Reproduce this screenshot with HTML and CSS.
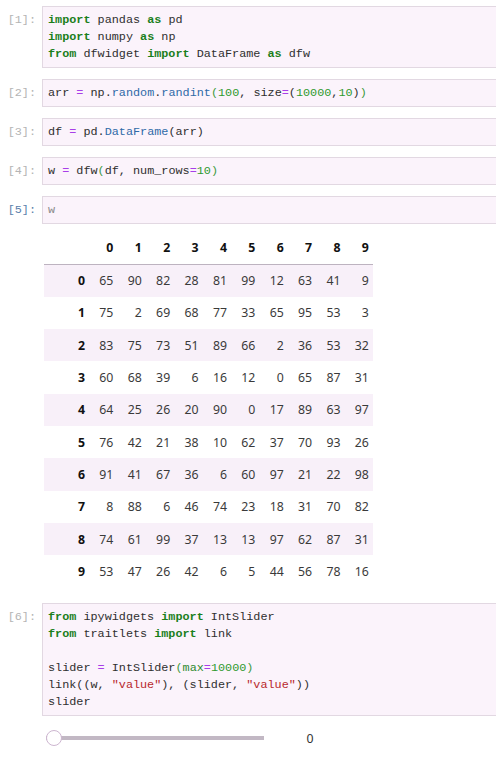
FILE: index.html
```html
<!DOCTYPE html>
<html>
<head>
<meta charset="utf-8">
<link rel="stylesheet" href="styles.css">
</head>
<body>
<div class="nb">
  <div class="cell">
    <div class="prompt">[1]:</div>
    <div class="input">
      <div class="ln"><span class="k">import</span> pandas <span class="k">as</span> pd</div>
      <div class="ln"><span class="k">import</span> numpy <span class="k">as</span> np</div>
      <div class="ln"><span class="k">from</span> dfwidget <span class="k">import</span> DataFrame <span class="k">as</span> dfw</div>
    </div>
  </div>
  <div class="cell">
    <div class="prompt">[2]:</div>
    <div class="input">
      <div class="ln">arr <span class="o">=</span> np.<span class="p">random</span>.<span class="p">randint</span><span class="mb">(</span><span class="n">100</span>, size<span class="o">=</span>(<span class="n">10000</span>,<span class="n">10</span>)<span class="mb">)</span></div>
    </div>
  </div>
  <div class="cell">
    <div class="prompt">[3]:</div>
    <div class="input">
      <div class="ln">df <span class="o">=</span> pd.<span class="p">DataFrame</span>(arr)</div>
    </div>
  </div>
  <div class="cell">
    <div class="prompt">[4]:</div>
    <div class="input">
      <div class="ln">w <span class="o">=</span> dfw<span class="mb">(</span>df, num_rows<span class="o">=</span><span class="n">10</span><span class="mb">)</span></div>
    </div>
  </div>
  <div class="cell">
    <div class="prompt active">[5]:</div>
    <div class="input faded">
      <div class="ln">w</div>
    </div>
  </div>

  <div class="output">
    <table class="df">
      <colgroup>
        <col class="c-idx"><col class="c"><col class="c"><col class="c"><col class="c"><col class="c"><col class="c"><col class="c"><col class="c"><col class="c"><col class="c">
      </colgroup>
      <thead>
        <tr><th></th><th>0</th><th>1</th><th>2</th><th>3</th><th>4</th><th>5</th><th>6</th><th>7</th><th>8</th><th>9</th></tr>
      </thead>
      <tbody>
        <tr><th>0</th><td>65</td><td>90</td><td>82</td><td>28</td><td>81</td><td>99</td><td>12</td><td>63</td><td>41</td><td>9</td></tr>
        <tr><th>1</th><td>75</td><td>2</td><td>69</td><td>68</td><td>77</td><td>33</td><td>65</td><td>95</td><td>53</td><td>3</td></tr>
        <tr><th>2</th><td>83</td><td>75</td><td>73</td><td>51</td><td>89</td><td>66</td><td>2</td><td>36</td><td>53</td><td>32</td></tr>
        <tr><th>3</th><td>60</td><td>68</td><td>39</td><td>6</td><td>16</td><td>12</td><td>0</td><td>65</td><td>87</td><td>31</td></tr>
        <tr><th>4</th><td>64</td><td>25</td><td>26</td><td>20</td><td>90</td><td>0</td><td>17</td><td>89</td><td>63</td><td>97</td></tr>
        <tr><th>5</th><td>76</td><td>42</td><td>21</td><td>38</td><td>10</td><td>62</td><td>37</td><td>70</td><td>93</td><td>26</td></tr>
        <tr><th>6</th><td>91</td><td>41</td><td>67</td><td>36</td><td>6</td><td>60</td><td>97</td><td>21</td><td>22</td><td>98</td></tr>
        <tr><th>7</th><td>8</td><td>88</td><td>6</td><td>46</td><td>74</td><td>23</td><td>18</td><td>31</td><td>70</td><td>82</td></tr>
        <tr><th>8</th><td>74</td><td>61</td><td>99</td><td>37</td><td>13</td><td>13</td><td>97</td><td>62</td><td>87</td><td>31</td></tr>
        <tr><th>9</th><td>53</td><td>47</td><td>26</td><td>42</td><td>6</td><td>5</td><td>44</td><td>56</td><td>78</td><td>16</td></tr>
      </tbody>
    </table>
  </div>

  <div class="cell cell-last">
    <div class="prompt">[6]:</div>
    <div class="input">
      <div class="ln"><span class="k">from</span> ipywidgets <span class="k">import</span> IntSlider</div>
      <div class="ln"><span class="k">from</span> traitlets <span class="k">import</span> link</div>
      <div class="ln blank"></div>
      <div class="ln">slider <span class="o">=</span> IntSlider<span class="mb">(</span><span class="bi">max</span><span class="o">=</span><span class="n">10000</span><span class="mb">)</span></div>
      <div class="ln">link((w, <span class="s">"value"</span>), (slider, <span class="s">"value"</span>))</div>
      <div class="ln">slider</div>
    </div>
  </div>

  <div class="widget">
    <div class="slider">
      <div class="track"></div>
      <div class="knob"></div>
    </div>
    <div class="readout">0</div>
  </div>
</div>
</body>
</html>
```

FILE: styles.css
```css
html, body {
  margin: 0;
  padding: 0;
  background: #ffffff;
  overflow: hidden;
}

.nb {
  width: 496px;
  padding-top: 6px;
  display: flex;
  flex-direction: column;
}

.cell {
  display: flex;
  align-items: flex-start;
  margin-bottom: 11px;
}

.prompt {
  width: 36px;
  padding-right: 6px;
  padding-top: 6px;
  text-align: right;
  font-family: "Liberation Mono", "DejaVu Sans Mono", monospace;
  font-size: 11.8px;
  line-height: 17px;
  color: #b4b4b4;
  flex: none;
}

.prompt.active {
  color: #5a7eab;
}

.input {
  flex: 1;
  margin: 0;
  padding: 5px 0 4px 5px;
  background: #fbf3fb;
  border: 1px solid #e2d8e2;
  border-right: none;
  font-family: "Liberation Mono", "DejaVu Sans Mono", monospace;
  font-size: 11.8px;
  line-height: 17px;
  color: #2f2f2f;
}

.ln {
  height: 17px;
  white-space: pre;
}

.input.faded {
  color: #8a8a8a;
}

.k { color: #1b7f1b; font-weight: bold; }
.o { color: #a83fe8; }
.p { color: #2f6aa8; }
.n { color: #2e9a2e; }
.s { color: #b8282c; }
.mb { color: #3c9a3c; }
.bi { color: #2e8a2e; }

.output {
  margin-top: -4px;
  padding-left: 44px;
}

.df {
  border-collapse: collapse;
  table-layout: fixed;
  font-family: "Noto Sans", "Open Sans", sans-serif;
  font-size: 12.3px;
  color: #3a3a3a;
}

.c-idx { width: 45px; }
.c { width: 28.4px; }

.df th, .df td {
  padding: 0 4px 0 0;
  text-align: right;
  white-space: nowrap;
}

.df thead th {
  height: 33px;
  font-weight: bold;
  color: #111;
  border-bottom: 1px solid #bdb3c0;
}

.df tbody tr {
  height: 32.3px;
}

.df tbody th {
  font-weight: bold;
  color: #111;
}

.df tbody tr:nth-child(odd) {
  background: #f8f0f9;
}

.cell-last {
  margin-top: 16px;
  margin-bottom: 0;
}

.widget {
  display: flex;
  align-items: center;
  margin-top: 14px;
  padding-left: 46px;
  height: 16px;
}

.slider {
  position: relative;
  width: 218px;
  height: 16px;
  display: flex;
  align-items: center;
}

.track {
  width: 100%;
  height: 4px;
  background: #c2b8c4;
}

.knob {
  position: absolute;
  left: 0;
  top: 0;
  width: 14px;
  height: 14px;
  border-radius: 50%;
  background: #ffffff;
  border: 1px solid #cdb6d0;
}

.readout {
  width: 92px;
  text-align: center;
  font-family: "Noto Sans", "Open Sans", sans-serif;
  font-size: 12.3px;
  color: #333;
}
```
